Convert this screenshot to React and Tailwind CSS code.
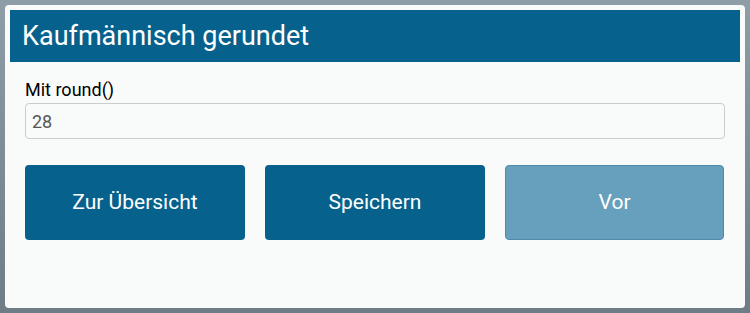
export default function App() {
  return (
    <div
      className="w-[750px] h-[313px] p-[5px] bg-gradient-to-b from-[#8f9ea6] to-[#6d7c85]"
      style={{ fontFamily: 'Roboto, "Liberation Sans", sans-serif' }}
    >
      <div className="h-[303px] w-[740px] rounded-[4px] bg-[#f9fbfb] p-[5px]">
        <div className="h-[52px] bg-[#06628d] px-3 flex items-center">
          <h1 className="text-[27px] text-white leading-none">Kaufmännisch gerundet</h1>
        </div>
        <div className="px-[15px] pt-[17px]">
          <label className="block text-[18px] text-black leading-[22px] mb-[2px]">Mit round()</label>
          <div className="h-[36px] border border-[#cccccc] rounded-[4px] bg-[#f9fbfb] px-[6px] flex items-center text-[18px] text-[#555555]">
            28
          </div>
          <div className="mt-[26px] flex gap-[20px]">
            <button className="w-[220px] h-[75px] rounded-[4px] bg-[#06628d] text-white text-[21px]">
              Zur Übersicht
            </button>
            <button className="w-[220px] h-[75px] rounded-[4px] bg-[#06628d] text-white text-[21px]">
              Speichern
            </button>
            <button className="w-[219px] h-[75px] rounded-[4px] bg-[#67a0bd] border border-[#4f8aab] text-white text-[21px]">
              Vor
            </button>
          </div>
        </div>
      </div>
    </div>
  )
}
